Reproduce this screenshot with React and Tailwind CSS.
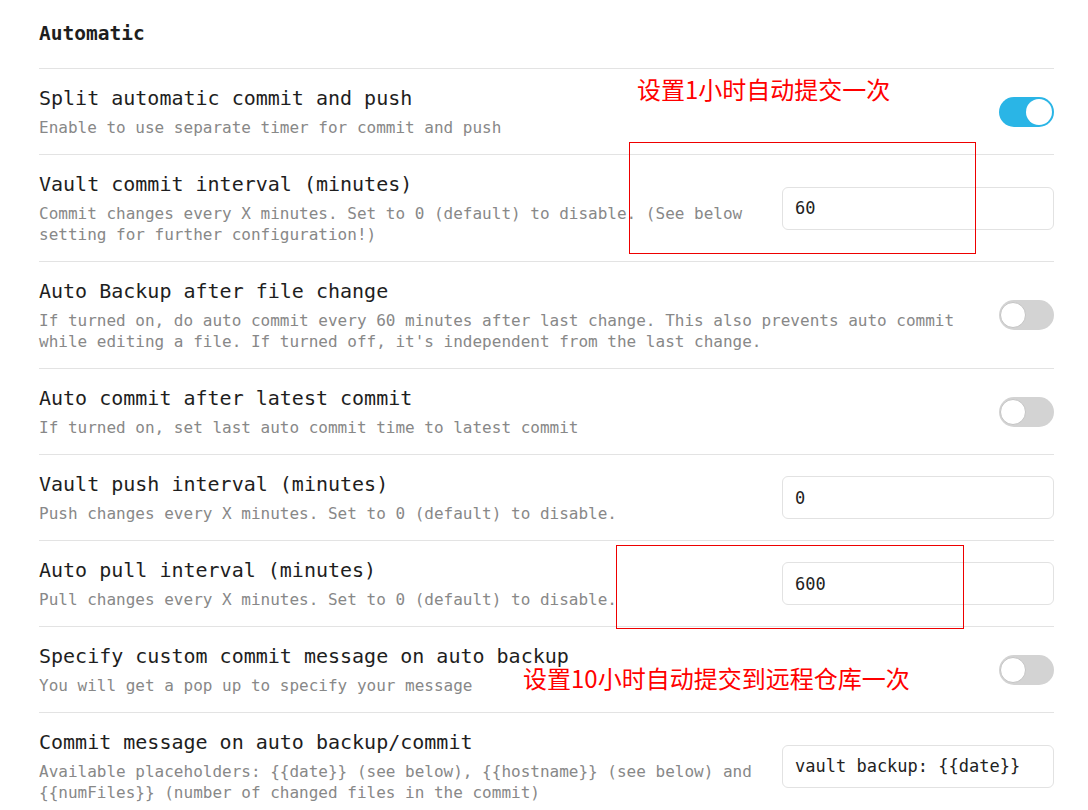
import { useState } from "react";

const mono = "font-['DejaVu_Sans_Mono','Liberation_Mono',monospace]";

const Toggle = ({ on }) => {
    const [checked, setChecked] = useState(on);
    return (
        <button
            onClick={() => setChecked(!checked)}
            className={`relative h-[30px] w-[55px] shrink-0 rounded-full ${
                checked ? "bg-[#2ab5e6]" : "bg-[#d3d3d3]"
            }`}
        >
            <span
                className={`absolute top-[2px] h-[26px] w-[26px] rounded-full bg-white ${
                    checked ? "right-[2px]" : "left-[1px] border border-[#c4c4c4]"
                }`}
            />
        </button>
    );
};

const TextBox = ({ value }) => (
    <input
        type="text"
        defaultValue={value}
        className={`${mono} h-[43px] w-[272px] shrink-0 rounded-md border border-[#e2e2e2] bg-white px-[12px] text-[17px] text-[#222] outline-none`}
    />
);

const settings = [
    {
        name: "Split automatic commit and push",
        desc: ["Enable to use separate timer for commit and push"],
        toggle: true,
    },
    {
        name: "Vault commit interval (minutes)",
        desc: ["Commit changes every X minutes. Set to 0 (default) to disable. (See below", "setting for further configuration!)"],
        input: "60",
    },
    {
        name: "Auto Backup after file change",
        desc: ["If turned on, do auto commit every 60 minutes after last change. This also prevents auto commit", "while editing a file. If turned off, it's independent from the last change."],
        toggle: false,
    },
    {
        name: "Auto commit after latest commit",
        desc: ["If turned on, set last auto commit time to latest commit"],
        toggle: false,
    },
    {
        name: "Vault push interval (minutes)",
        desc: ["Push changes every X minutes. Set to 0 (default) to disable."],
        input: "0",
    },
    {
        name: "Auto pull interval (minutes)",
        desc: ["Pull changes every X minutes. Set to 0 (default) to disable."],
        input: "600",
    },
    {
        name: "Specify custom commit message on auto backup",
        desc: ["You will get a pop up to specify your message"],
        toggle: false,
    },
    {
        name: "Commit message on auto backup/commit",
        desc: ["Available placeholders: {{date}} (see below), {{hostname}} (see below) and", "{{numFiles}} (number of changed files in the commit)"],
        input: "vault backup: {{date}}",
    },
];

const App = () => {
    return (
        <div className={`${mono} relative h-[810px] w-[1088px] overflow-hidden bg-white pl-[39px] pr-[34px]`}>

            {/* Heading */}
            <div className="flex h-[68px] items-center">
                <h2 className="text-[19.5px] font-bold text-[#1e1e1e]">Automatic</h2>
            </div>

            {/* Settings */}
            {settings.map((item) => (
                <div
                    key={item.name}
                    className="flex items-center justify-between gap-5 border-t border-[#e3e3e3] pt-[16px] pb-[16px]"
                >
                    <div className="min-w-0 flex-1">
                        <div className="text-[20px] leading-[26px] text-[#1e1e1e]">{item.name}</div>
                        <div className="mt-[6px] text-[16px] leading-[21px] text-[#888]">
                            {item.desc.map((line) => (
                                <div key={line} className="whitespace-pre">{line}</div>
                            ))}
                        </div>
                    </div>
                    {item.input !== undefined ? <TextBox value={item.input} /> : <Toggle on={item.toggle} />}
                </div>
            ))}

            {/* Annotations */}
            <div className="pointer-events-none absolute left-[637px] top-[73px] font-['Noto_Sans_CJK_SC',sans-serif] text-[24px] leading-[32px] text-[#f00]">
                设置1小时自动提交一次
            </div>
            <div className="pointer-events-none absolute left-[629px] top-[142px] h-[112px] w-[347px] border border-[#e00]" />
            <div className="pointer-events-none absolute left-[616px] top-[545px] h-[84px] w-[348px] border border-[#e00]" />
            <div className="pointer-events-none absolute left-[523px] top-[662px] font-['Noto_Sans_CJK_SC',sans-serif] text-[24px] leading-[32px] text-[#f00]">
                设置10小时自动提交到远程仓库一次
            </div>
        </div>
    );
};

export default App;
